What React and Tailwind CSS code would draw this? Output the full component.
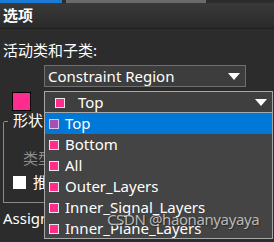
import React from 'react';

const layers = ['Top', 'Bottom', 'All', 'Outer_Layers', 'Inner_Signal_Layers', 'Inner_Plane_Layers'];

function Arrow() {
    return (
        <svg width="12" height="7" viewBox="0 0 12 7">
            <path d="M0 0 H12 L6 7 Z" fill="#ffffff" />
        </svg>
    );
}

function Swatch({ selected }) {
    return (
        <span
            className={`block w-[10px] h-[10px] border ${selected ? 'bg-[#a64fb4] border-[#d9c2e6]' : 'bg-[#ff2d8c] border-[#e8e8e8]'}`}
        />
    );
}

export default function App() {
    return (
        <div
            className="relative w-[274px] h-[242px] overflow-hidden bg-[#2c2c2c] text-white text-[15px] leading-none"
            style={{ fontFamily: '"Noto Sans", "Noto Sans CJK SC", sans-serif' }}
        >
            {/* tab strip */}
            <div className="flex gap-[4px] h-[3px]">
                <div className="w-[62px] bg-[#1a7ad4]" />
                <div className="w-[140px] bg-[#6a6a6a]" />
            </div>

            {/* header */}
            <div className="h-[26px] flex items-center pl-[3px] bg-gradient-to-b from-[#393939] to-[#2a2a2a] border-b border-[#1e1e1e]">
                <span className="font-bold text-[15px]">选项</span>
            </div>

            <div className="flex flex-col">
                <div className="pl-[3px] pt-[14px] h-[36px]">活动类和子类:</div>

                <div className="ml-[44px] w-[202px] h-[22px] border border-[#6e6e6e] bg-[#3d3d3d] flex items-center justify-between pl-[3px] pr-[5px]">
                    <span className="text-[15px]">Constraint Region</span>
                    <Arrow />
                </div>

                <div className="flex items-start mt-[4px]">
                    <div className="ml-[12px] mt-[1px] w-[19px] h-[19px] border border-black bg-[#ff2b8e]" />
                    <div className="ml-[13px] w-[229px] h-[22px] border border-[#a8a8a8] border-b-0 bg-[#3f3f3f] flex items-center justify-between pl-[10px] pr-[5px]">
                        <div className="flex items-center gap-[13px]">
                            <Swatch />
                            <span>Top</span>
                        </div>
                        <Arrow />
                    </div>
                </div>

                {/* group box */}
                <div className="relative ml-[3px] mt-[9px] w-[60px] h-[81px] border-l border-b border-[#8a8a8a]">
                    <div className="absolute -top-[1px] left-0 w-[4px] h-px bg-[#8a8a8a]" />
                    <span className="absolute -top-[9px] left-[9px]">形状</span>
                    <span className="absolute top-[29px] left-[19px] text-[#8c8c8c]">类型</span>
                    <div className="absolute top-[54px] left-[9px] w-[13px] h-[13px] bg-white" />
                    <span className="absolute top-[53px] left-[29px]">推</span>
                </div>
                <div className="pl-[3px] pt-[8px]">Assign</div>
            </div>

            {/* dropdown list */}
            <div className="absolute left-[44px] top-[112px] w-[229px] h-[127px] border border-[#a8a8a8] bg-[#444444] flex flex-col">
                {layers.map((l, i) => (
                    <div
                        key={l}
                        className={`h-[21px] shrink-0 flex items-center gap-[6px] pl-[4px] ${i === 0 ? 'bg-[#0078d7]' : ''}`}
                    >
                        <Swatch selected={i === 0} />
                        <span>{l}</span>
                    </div>
                ))}
            </div>

            {/* watermark */}
            <div className="absolute left-[107px] top-[212px] text-[15px] tracking-[-0.4px] text-[#b8b8b8] [text-shadow:1px_1px_1px_#2a2a2a]">
                CSDN @haonanyayaya
            </div>
        </div>
    );
}
